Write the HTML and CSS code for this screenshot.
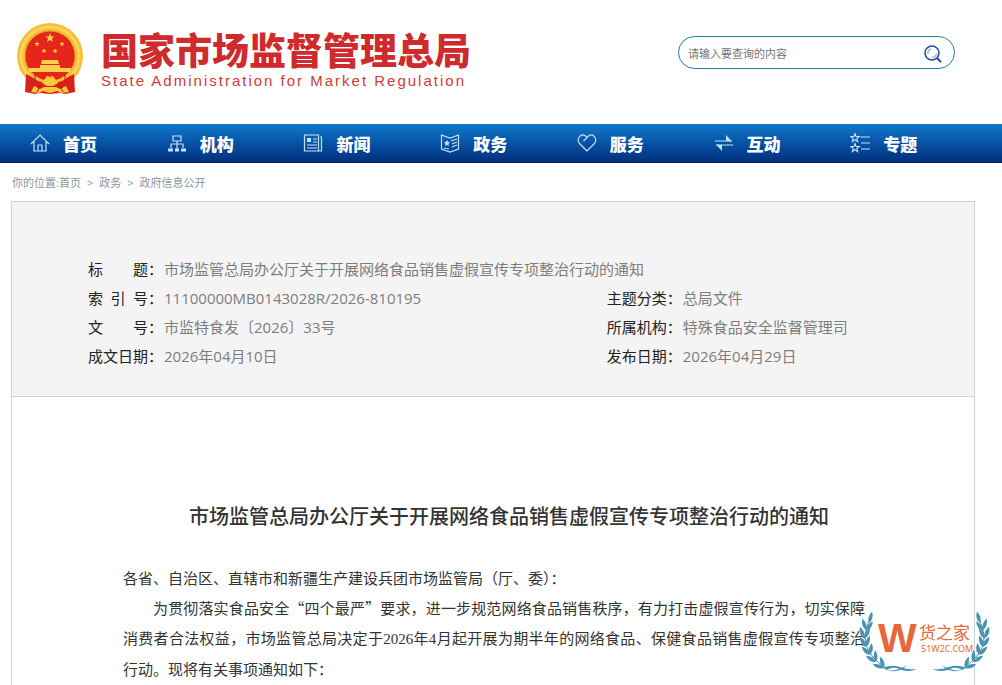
FILE: index.html
```html
<!DOCTYPE html>
<html lang="zh-CN">
  <head>
    <meta charset="utf-8">
    <title>国家市场监督管理总局</title>
    <link rel="stylesheet" href="styles.css">
  </head>
  <body>
    <header class="header">
      <a class="logo" href="#">
        <svg class="emblem" viewBox="0 0 66 72" aria-hidden="true">
          <defs>
            <path id="star" d="M0-5 1.2-1.6 4.8-1.6 1.9.6 3 4 0 1.9-3 4-1.9.6-4.8-1.6-1.2-1.6z" />
          </defs>
          <circle cx="33" cy="33" r="33" fill="#f6bd35" />
          <circle cx="33" cy="33" r="29" fill="none" stroke="#fbd35c" stroke-width="3" />
          <circle cx="33" cy="33" r="25" fill="#e6261c" stroke="#dc9b1e" />
          <g fill="#fbd04a">
            <use href="#star" x="33" y="15" />
            <use href="#star" transform="translate(20 21) scale(.55)" />
            <use href="#star" transform="translate(45 21) scale(.55)" />
            <use href="#star" transform="translate(27 28) scale(.55)" />
            <use href="#star" transform="translate(38 28) scale(.55)" />
            <path d="M25 37h16l1 4H24zM23 42h20v3h11v4H12v-4h11z" />
          </g>
          <path d="M9 51l8 4 32 0 8-4 1 18-10 2-5-1-10 1-10-1-5 1-10-2z" fill="#d9211c" />
          <path d="M15 50q8 8 18 7 10 1 18-7l2 2q-8 9-20 8-12 1-20-8z" fill="#f6bd35" />
          <path d="M27 57l3-4 3 1 3-1 3 4 2 3-5 3h-6l-5-3zM14 69l3-6 6 3 4-2h12l4 2 6-3 3 6-8 1-4-2-7 2-7-2-4 2z" fill="#fbc83c" />
          <path d="M18 51v8M48 51v8M23 63l-3 6M43 63l3 6" stroke="#b8131a" fill="none" />
        </svg>
        <span class="logo-text">
          <span class="logo-name">国家市场监督管理总局</span>
          <span class="logo-en">State Administration for Market Regulation</span>
        </span>
      </a>
      <form class="search">
        <input type="text" placeholder="请输入要查询的内容" aria-label="请输入要查询的内容">
        <button type="submit" aria-label="搜索">
          <svg viewBox="0 0 18 18" fill="none">
            <circle cx="8" cy="8" r="7" stroke="#2c4c97" stroke-width="1.6" />
            <path d="M4 9a4 4 0 0 1 3-5M8 12.500q4 0 4.500-4" stroke="#9fb0e8" stroke-width="1.4" />
            <path d="M13 13l4 4" stroke="#2c4c97" stroke-width="2" />
          </svg>
        </button>
      </form>
    </header>

    <nav class="nav">
      <a href="#">
        <svg viewBox="0 0 20 20"><path d="M1 11 10 2l9 9M4 9v9h12V9M8 18v-6h4v6" /></svg>
        首页
      </a>
      <a href="#">
        <svg viewBox="0 0 20 20"><path d="M6 3h8v5H6zM10 8v8M4 15v-4h12v4" /><path class="thick" d="M1 17h5M8 17h4M14 17h5" /></svg>
        机构
      </a>
      <a href="#">
        <svg viewBox="0 0 20 20"><path d="M1.500 2h14v16h-14zM17 4h1.500v14H15M10 6h4M10 9h4M4 12h10M4 15h10" /><path class="fill" d="M4 5h4v4H4z" /></svg>
        新闻
      </a>
      <a href="#">
        <svg viewBox="0 0 20 20"><path d="M1.500 2 10 5l8.500-3v14L10 19l-8.500-3zM11 8l6-2M12 11l5-2M12 14l5-2M4 15l5 1" /><path class="fill" d="M7 7l1 2h2L8.500 11l.5 2-2-1-2 1 .5-2L4 9h2z" /></svg>
        政务
      </a>
      <a href="#">
        <svg viewBox="0 0 20 20"><path d="M10 18 2.500 10.500C-1 6 4-.5 8.500 3L10 4.500 11.500 3c4.500-3.500 9.500 3 6 7.500zM10 4.500 6.500 8" /></svg>
        服务
      </a>
      <a href="#">
        <svg viewBox="0 0 20 20"><path d="M1 8h17M2 12h17" /><path class="fill" d="M18 8.500 12 2v6zM2 11.500 8 18v-6z" /></svg>
        互动
      </a>
      <a href="#">
        <svg viewBox="0 0 20 20"><path d="M11 4h9M11 10h9M11 16h9" /><use href="#star" transform="translate(5 5) scale(.9)" /><use href="#star" transform="translate(5 15) scale(.9)" /></svg>
        专题
      </a>
    </nav>

    <main class="main">
      <div class="breadcrumb">
        你的位置:<a href="#">首页</a><span>&gt;</span><a href="#">政务</a><span>&gt;</span><a href="#">政府信息公开</a>
      </div>

      <article class="article">
        <dl class="info">
          <div class="wide"><dt><span>标 题</span>：</dt><dd>市场监管总局办公厅关于开展网络食品销售虚假宣传专项整治行动的通知</dd></div>
          <div><dt><span>索 引 号</span>：</dt><dd>11100000MB0143028R/2026-810195</dd></div>
          <div><dt><span>主题分类</span>：</dt><dd>总局文件</dd></div>
          <div><dt><span>文 号</span>：</dt><dd>市监特食发〔2026〕33号</dd></div>
          <div><dt><span>所属机构</span>：</dt><dd>特殊食品安全监督管理司</dd></div>
          <div><dt><span>成文日期</span>：</dt><dd>2026年04月10日</dd></div>
          <div><dt><span>发布日期</span>：</dt><dd>2026年04月29日</dd></div>
        </dl>

        <div class="content">
          <h1>市场监管总局办公厅关于开展网络食品销售虚假宣传专项整治行动的通知</h1>
          <p class="lead">各省、自治区、直辖市和新疆生产建设兵团市场监管局（厅、委）：</p>
          <p>为贯彻落实食品安全“四个最严”要求，进一步规范网络食品销售秩序，有力打击虚假宣传行为，切实保障消费者合法权益，市场监管总局决定于<span class="num">2026</span>年<span class="num">4</span>月起开展为期半年的网络食品、保健食品销售虚假宣传专项整治行动。现将有关事项通知如下：</p>
        </div>

        <svg class="watermark" viewBox="0 0 131 61">
          <defs>
            <path id="leaf" d="M0 0Q-4-5 0-12 4-5 0 0z" />
            <g id="branch">
              <path d="M10 10Q-3 38 27 57" fill="none" stroke="#4b93b5" />
              <use href="#leaf" transform="translate(10 12) rotate(15)" />
              <use href="#leaf" transform="translate(7 19) rotate(-18)" />
              <use href="#leaf" transform="translate(7 20) rotate(35)" />
              <use href="#leaf" transform="translate(5 27) rotate(-20)" />
              <use href="#leaf" transform="translate(5 28) rotate(30)" />
              <use href="#leaf" transform="translate(7 36) rotate(-32)" />
              <use href="#leaf" transform="translate(7 36) rotate(18)" />
              <use href="#leaf" transform="translate(11 44) rotate(-45)" />
              <use href="#leaf" transform="translate(11 44) rotate(8)" />
              <use href="#leaf" transform="translate(17 51) rotate(-58)" />
              <use href="#leaf" transform="translate(17 51) rotate(-4)" />
              <use href="#leaf" transform="translate(25 57) rotate(-72)" />
              <use href="#leaf" transform="translate(25 57) rotate(-18)" />
              <path d="M24 57q8-4 17-1 8 3 17 2-9 4-18 0-6-3-12 1z" />
              <path d="M28 59q10 2 20-5-8 9-20 5z" />
            </g>
          </defs>
          <use href="#branch" />
          <use href="#branch" transform="translate(131 0) scale(-1 1)" />
          <text class="mark-w" x="19" y="41">W</text>
          <text class="mark-name" x="60" y="28">货之家</text>
          <text class="mark-url" x="62" y="41">51W2C.COM</text>
        </svg>
      </article>
    </main>
  </body>
</html>
```
FILE: styles.css
```css
* {
  box-sizing: border-box;
}

body {
  margin: 0;
  background: #fff;
  color: #333;
  font-family: "Open Sans", "Noto Sans CJK SC", sans-serif;
}

a {
  color: inherit;
  text-decoration: none;
}

.header {
  display: flex;
  justify-content: space-between;
  height: 124px;
  padding: 23px 47px 0 17px;
}

.logo {
  display: flex;
  gap: 18px;
}

.emblem {
  width: 66px;
  height: 72px;
}

.logo-text {
  padding-top: 6px;
}

.logo-name,
.logo-en {
  display: block;
  white-space: nowrap;
}

.logo-name {
  color: #cf2b2d;
  font-family: "Noto Sans CJK SC", sans-serif;
  font-size: 37px;
  font-weight: 900;
  line-height: 40px;
}

.logo-en {
  color: #cf3a3a;
  font-family: "Liberation Sans", sans-serif;
  font-size: 15px;
  letter-spacing: 2px;
  line-height: 24px;
}

.search {
  display: flex;
  align-items: center;
  width: 277px;
  height: 33px;
  margin-top: 13px;
  padding: 2px 12px 0 9px;
  border: 1px solid #1b7f9f;
  border-radius: 17px;
}

.search input {
  flex: 1;
  min-width: 0;
  padding: 0;
  border: 0;
  outline: 0;
  background: none;
  font-family: inherit;
  font-size: 11px;
}

.search input::placeholder {
  color: #757575;
}

.search button {
  width: 18px;
  height: 18px;
  padding: 0;
  border: 0;
  background: none;
  cursor: pointer;
}

.search svg {
  display: block;
}

.nav {
  display: grid;
  grid-template-columns: repeat(7, 1fr);
  height: 39px;
  padding: 0 15px 0 30px;
  background: linear-gradient(#1279cb, #0653a5 50%, #022f7d);
  border-bottom: 1px solid #04235f;
}

.nav a {
  display: flex;
  align-items: center;
  gap: 13px;
  color: #fff;
  font-family: "Noto Sans CJK SC", sans-serif;
  font-size: 17px;
  font-weight: 900;
}

.nav svg {
  width: 20px;
  height: 20px;
  fill: none;
  stroke: #c5e1fa;
  stroke-width: 1.2;
}

.nav .thick {
  stroke-width: 3;
}

.nav .fill {
  fill: #c5e1fa;
  stroke: none;
}

.main {
  padding: 0 27px 0 11px;
}

.breadcrumb {
  height: 38px;
  padding-left: 1px;
  color: #8e959f;
  font-size: 11px;
  line-height: 39px;
}

.breadcrumb span {
  margin: 0 6px;
}

.article {
  position: relative;
  border: 1px solid #ccd3da;
  border-bottom: 0;
}

.info {
  display: grid;
  grid-template-columns: 9fr 5fr;
  margin: 0;
  padding: 53px 79px 25px 76px;
  background: #f4f4f4;
  border-bottom: 1px solid #ccd3da;
  font-size: 15px;
  line-height: 29px;
}

.info div {
  display: flex;
}

.info .wide {
  grid-column: 1 / -1;
}

.info dt {
  display: flex;
  width: 76px;
  color: #222;
}

.info dt span {
  width: 60px;
  text-align-last: justify;
}

.info dd {
  margin: 0;
  color: #7d7d7d;
}

.content {
  padding: 104px 109px 1px 111px;
  font-family: "Noto Sans CJK SC", sans-serif;
}

.content h1 {
  margin: 0 0 32px;
  font-size: 20px;
  font-weight: 500;
  line-height: 30px;
  text-align: center;
  text-indent: 30px;
  white-space: nowrap;
}

.content p {
  margin: 0;
  font-size: 15px;
  line-height: 30px;
  text-align: justify;
  text-indent: 2em;
}

.content .lead {
  text-indent: 0;
}

.num {
  font-family: "Liberation Serif", serif;
}

.watermark {
  position: absolute;
  right: -16px;
  bottom: 13px;
  width: 131px;
  height: 61px;
  fill: #4b93b5;
}

.watermark text {
  fill: #e8673a;
}

.mark-w {
  font: bold 41px "Liberation Sans", sans-serif;
}

.mark-name {
  font: 17px "Noto Sans CJK SC", sans-serif;
}

.mark-url {
  font: 9px "Noto Sans", sans-serif;
}
```
